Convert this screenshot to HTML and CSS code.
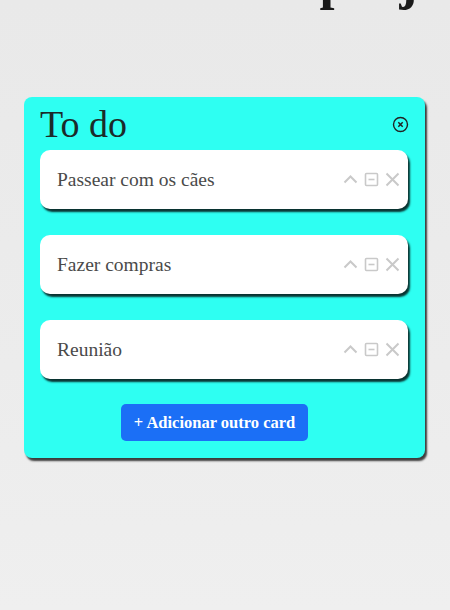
FILE: index.html
```html
<!DOCTYPE html>
<html lang="pt">
<head>
<meta charset="utf-8">
<link rel="stylesheet" href="styles.css">
</head>
<body>
<h1 class="page-title">Meus projetos</h1>
<section class="list">
  <header class="list-head">
    <h2 class="list-title">To do</h2>
    <button class="list-close" aria-label="Fechar">
      <svg width="17" height="17" viewBox="0 0 17 17"><circle cx="8.5" cy="8.5" r="7" fill="none" stroke="#222" stroke-width="1.4"/><path d="M6.3 6.3l4.4 4.4M10.7 6.3l-4.4 4.4" stroke="#222" stroke-width="1.5"/></svg>
    </button>
  </header>
  <div class="cards">
    <div class="card">
      <span class="card-text">Passear com os cães</span>
      <div class="card-actions">
        <svg width="15" height="15" viewBox="0 0 15 15"><path d="M1.5 10.5L7.5 4.5L13.5 10.5" fill="none" stroke="#c9c9c9" stroke-width="2"/></svg>
        <svg width="15" height="15" viewBox="0 0 15 15"><rect x="1.5" y="1.5" width="12" height="12" rx="1" fill="none" stroke="#c9c9c9" stroke-width="1.6"/><path d="M4.5 7.5h6" stroke="#c9c9c9" stroke-width="1.6"/></svg>
        <svg width="15" height="15" viewBox="0 0 15 15"><path d="M1.5 1.5L13.5 13.5M13.5 1.5L1.5 13.5" stroke="#c9c9c9" stroke-width="2"/></svg>
      </div>
    </div>
    <div class="card">
      <span class="card-text">Fazer compras</span>
      <div class="card-actions">
        <svg width="15" height="15" viewBox="0 0 15 15"><path d="M1.5 10.5L7.5 4.5L13.5 10.5" fill="none" stroke="#c9c9c9" stroke-width="2"/></svg>
        <svg width="15" height="15" viewBox="0 0 15 15"><rect x="1.5" y="1.5" width="12" height="12" rx="1" fill="none" stroke="#c9c9c9" stroke-width="1.6"/><path d="M4.5 7.5h6" stroke="#c9c9c9" stroke-width="1.6"/></svg>
        <svg width="15" height="15" viewBox="0 0 15 15"><path d="M1.5 1.5L13.5 13.5M13.5 1.5L1.5 13.5" stroke="#c9c9c9" stroke-width="2"/></svg>
      </div>
    </div>
    <div class="card">
      <span class="card-text">Reunião</span>
      <div class="card-actions">
        <svg width="15" height="15" viewBox="0 0 15 15"><path d="M1.5 10.5L7.5 4.5L13.5 10.5" fill="none" stroke="#c9c9c9" stroke-width="2"/></svg>
        <svg width="15" height="15" viewBox="0 0 15 15"><rect x="1.5" y="1.5" width="12" height="12" rx="1" fill="none" stroke="#c9c9c9" stroke-width="1.6"/><path d="M4.5 7.5h6" stroke="#c9c9c9" stroke-width="1.6"/></svg>
        <svg width="15" height="15" viewBox="0 0 15 15"><path d="M1.5 1.5L13.5 13.5M13.5 1.5L1.5 13.5" stroke="#c9c9c9" stroke-width="2"/></svg>
      </div>
    </div>
  </div>
  <button class="add-card">+ Adicionar outro card</button>
</section>
</body>
</html>
```
FILE: styles.css
```css
html, body {
  margin: 0;
  padding: 0;
}
body {
  width: 450px;
  height: 610px;
  overflow: hidden;
  background: linear-gradient(180deg, #e9e9e9 0%, #ececec 60%, #efefef 100%);
  font-family: "Liberation Serif", "DejaVu Serif", serif;
}
.page-title {
  margin: -50px 0 0 0;
  padding-left: 180px;
  height: 147px;
  box-sizing: border-box;
  font-size: 54px;
  line-height: 60px;
  font-weight: 700;
  color: #1a1a1a;
  white-space: nowrap;
}
.list {
  margin-left: 24px;
  width: 401px;
  box-sizing: border-box;
  background: #2efff2;
  border-radius: 8px;
  box-shadow: 2px 3px 2px rgba(0,0,0,0.75);
  padding: 0 17px 17px 16px;
  display: flex;
  flex-direction: column;
}
.list-head {
  height: 53px;
  display: flex;
  align-items: center;
  justify-content: space-between;
}
.list-title {
  margin: 0;
  font-size: 38px;
  font-weight: 400;
  color: #1b2a2a;
  line-height: 53px;
  padding-top: 2px;
}
.list-close {
  border: 0;
  background: none;
  padding: 0;
  margin-right: -1px;
  margin-top: 1px;
  display: flex;
}
.cards {
  display: flex;
  flex-direction: column;
  gap: 26px;
}
.card {
  height: 59px;
  background: #fff;
  border-radius: 10px;
  box-shadow: 2px 3px 2px rgba(0,0,0,0.8);
  display: flex;
  align-items: center;
  justify-content: space-between;
  padding: 0 8px 0 17px;
}
.card-text {
  font-size: 19.5px;
  color: #4a4a4a;
}
.card-actions {
  display: flex;
  gap: 6px;
  align-items: center;
}
.add-card {
  margin: 25px 0 0 81px;
  align-self: flex-start;
  width: 187px;
  height: 37px;
  border: 0;
  border-radius: 5px;
  background: #1b6ff6;
  color: #fff;
  font-family: "Liberation Serif", "DejaVu Serif", serif;
  font-size: 16.5px;
  font-weight: 700;
}
```
